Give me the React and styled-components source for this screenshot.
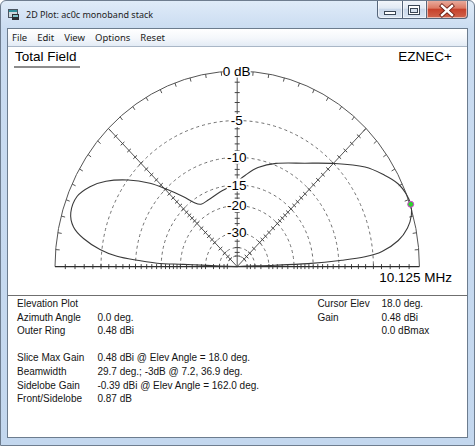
import styled, { createGlobalStyle } from 'styled-components'

const GlobalStyle = createGlobalStyle`
  html, body {
    margin: 0;
    padding: 0;
    background: #ffffff;
  }
  body {
    font-family: "Liberation Sans", Arial, sans-serif;
  }
`

const Window = styled.div`
  width: 475px;
  height: 446px;
  box-sizing: border-box;
  border: 1px solid #6e7d8f;
  border-radius: 6px 6px 0 0;
  background: linear-gradient(to bottom, #dfebf8 0px, #cadcf1 28px, #c3d7ee 100%);
  display: flex;
  flex-direction: column;
  overflow: hidden;
`

const TitleBar = styled.div`
  height: 27px;
  flex: none;
  display: flex;
  align-items: flex-start;
  padding-left: 7px;
`

const AppIcon = styled.svg`
  margin-top: 8px;
  flex: none;
`

const Caption = styled.div`
  margin: 7px 0 0 7px;
  font-family: "Noto Sans", "Open Sans", sans-serif;
  font-size: 9px;
  color: #1c1c1c;
  line-height: 14px;
`

const CaptionButtons = styled.div`
  display: flex;
  margin: -1px 6px 0 auto;
`

const CaptionButton = styled.div`
  width: ${p => p.$w}px;
  height: 19px;
  box-sizing: border-box;
  margin-left: -1px;
  border: 1px solid #56667b;
  border-top: none;
  border-radius: ${p => p.$radius};
  background: ${p => p.$close
    ? 'linear-gradient(#eab0a3, #dc7a64 45%, #c7412b 52%, #d0644c)'
    : 'linear-gradient(#f4f7fb, #e2eaf4 45%, #cad8ea 52%, #d9e5f3)'};
  box-shadow: inset 0 0 0 1px rgba(255, 255, 255, 0.55);
  svg { display: block; }
`

const Client = styled.div`
  flex: 1;
  margin: 0 6px 7px;
  border: 1px solid #6c7c8e;
  background: #ffffff;
  display: flex;
  flex-direction: column;
`

const MenuBar = styled.div`
  height: 17px;
  flex: none;
  display: flex;
  align-items: center;
  border-bottom: 1px solid #a9b6c6;
  background: linear-gradient(#ffffff, #f4f7fb 55%, #e3ebf5);
`

const MenuItem = styled.span`
  padding: 0 5px;
  font-family: "Noto Sans", "Open Sans", sans-serif;
  font-size: 9.5px;
  color: #1a1a1a;
  &:first-child { padding-left: 4px; }
`

const PlotPanel = styled.div`
  height: 248px;
  flex: none;
  display: grid;
  border-bottom: 1px solid #6f6f6f;
  & > * { grid-area: 1 / 1; }
`

const PlotHeader = styled.div`
  display: flex;
  justify-content: space-between;
  align-items: flex-start;
  padding: 2px 15px 0 6px;
  font-size: 13.5px;
  line-height: 15.5px;
  color: #000;
  z-index: 1;
  pointer-events: none;
`

const PlotTitle = styled.span`
  padding: 0 3px 1px 1px;
  border-bottom: 2px solid #8c8c8c;
`

const PlotSvg = styled.svg`
  display: block;
`

const InfoPanel = styled.div`
  flex: 1;
  display: flex;
  padding: 1px 0 0 9px;
  font-size: 10px;
  line-height: 13.6px;
  color: #141414;
`

const InfoGrid = styled.div`
  display: grid;
  grid-template-columns: ${p => p.$label}px auto;
  grid-auto-rows: 13.6px;
  width: ${p => p.$width};
  align-content: start;
`

const InfoWide = styled.div`
  grid-column: 1 / span 2;
`

const CX = 237.2
const CY = 266.6
const RX = 182.2
const RY = 195.5

const rOf = db => Math.pow(0.89, -db / 2)
const pt = (deg, r) => {
  const a = (deg * Math.PI) / 180
  return [CX + RX * r * Math.cos(a), CY - RY * r * Math.sin(a)]
}
const f = n => Math.round(n * 10) / 10

const arc = r => `M${f(CX - RX * r)},${CY} A${f(RX * r)} ${f(RY * r)} 0 0 1 ${f(CX + RX * r)},${CY}`

const rings = [-5, -10, -15, -20, -30, -40, -50]

const tickDbs = []
for (let d = -1; d >= -20; d--) tickDbs.push(d)
tickDbs.push(-22, -24, -26, -28, -30, -35, -40, -45, -50)

const axisAngles = [0, 45, 90, 135, 180]

const labels = [
  [0, '0 dB', 28],
  [-5, '-5', 13],
  [-10, '-10', 20],
  [-15, '-15', 20],
  [-20, '-20', 20],
  [-30, '-30', 20],
]

const pattern = [
  [237.2, 266.6], [246, 266], [275, 265.2], [308, 263.6], [342, 260.2],
  [365, 256.7], [382, 251.5], [398.3, 240.5], [407.5, 228], [411.4, 215],
  [410.7, 204.3], [406.5, 194.5], [398.3, 184], [385, 175.5], [365, 167],
  [335, 163.5], [305, 163.2], [276, 163.4], [258, 167.5], [245, 175.5],
  [232, 185.5], [220, 192], [209, 199.5], [201, 204.2], [194, 202.5],
  [183, 196.5], [168, 189.8], [150, 183.2], [128, 180], [106, 181.2],
  [90, 186.7], [77, 196.5], [70.8, 212.5], [73.5, 227], [83.5, 238.5],
  [100, 249.5], [117, 256.3], [137, 260.2], [157, 263.2], [183, 264.4],
  [207, 265.4], [237.2, 266.6],
]

function smoothPath(pts) {
  let d = `M${pts[0][0]},${pts[0][1]}`
  for (let i = 0; i < pts.length - 1; i++) {
    const p0 = pts[i - 1] || pts[i]
    const p1 = pts[i]
    const p2 = pts[i + 1]
    const p3 = pts[i + 2] || p2
    const c1 = [f(p1[0] + (p2[0] - p0[0]) / 6), f(p1[1] + (p2[1] - p0[1]) / 6)]
    const c2 = [f(p2[0] - (p3[0] - p1[0]) / 6), f(p2[1] - (p3[1] - p1[1]) / 6)]
    d += ` C${c1[0]},${c1[1]} ${c2[0]},${c2[1]} ${p2[0]},${p2[1]}`
  }
  return d
}

function axisTicks() {
  const out = []
  axisAngles.forEach(deg => {
    const a = (deg * Math.PI) / 180
    const dx = RX * Math.cos(a)
    const dy = -RY * Math.sin(a)
    const len = Math.hypot(dx, dy)
    const nx = -dy / len
    const ny = dx / len
    tickDbs.forEach(db => {
      const [x, y] = pt(deg, rOf(db))
      out.push(`M${f(x - nx * 2.5)},${f(y - ny * 2.5)} L${f(x + nx * 2.5)},${f(y + ny * 2.5)}`)
    })
  })
  return out.join(' ')
}

function rimTicks() {
  const out = []
  for (let deg = 5; deg < 180; deg += 5) {
    if (deg === 90) continue
    const [x, y] = pt(deg, 1)
    const dx = CX - x
    const dy = CY - y
    const len = Math.hypot(dx, dy)
    out.push(`M${f(x)},${f(y)} L${f(x + (dx / len) * 4)},${f(y + (dy / len) * 4)}`)
  }
  return out.join(' ')
}

const PolarPlot = () => {
  const [x45, y45] = pt(45, 1)
  const [x135, y135] = pt(135, 1)
  return (
    <PlotSvg width="459" height="248" viewBox="8 47 459 248">
      <g fill="none" stroke="#707070" strokeWidth="1" strokeDasharray="3 3">
        {rings.map(db => <path key={db} d={arc(rOf(db))} />)}
      </g>
      <g fill="none" stroke="#555" strokeWidth="1">
        <path d={arc(1)} />
        <line x1={CX} y1={CY} x2={f(x45)} y2={f(y45)} />
        <line x1={CX} y1={CY} x2={f(x135)} y2={f(y135)} />
        <line x1={CX} y1={CY} x2={CX} y2={CY - RY} />
        <path d={axisTicks()} stroke="#444" />
        <path d={rimTicks()} stroke="#555" />
      </g>
      <line x1={f(CX - RX)} y1={CY} x2={f(CX + RX)} y2={CY} stroke="#2e2e2e" strokeWidth="1.2" />
      <path d={smoothPath(pattern)} fill="none" stroke="#3a3a3a" strokeWidth="1.1" />
      <circle cx="410.7" cy="204.3" r="3" fill="#2fd12f" stroke="#d640d6" strokeWidth="1" />
      <g fontFamily='"Liberation Sans", Arial, sans-serif' fontSize="13.5" fill="#000" textAnchor="middle">
        {labels.map(([db, text, w]) => {
          const y = CY - RY * rOf(db)
          return (
            <g key={db}>
              <rect x={f(CX - w / 2 - 0.5)} y={f(y - 6.5)} width={w} height="13" fill="#fff" />
              <text x={CX - 0.5} y={f(y + 4.8)}>{text}</text>
            </g>
          )
        })}
        <text x="452" y="281.7" textAnchor="end">10.125 MHz</text>
      </g>
    </PlotSvg>
  )
}

const leftRows = [
  ['Azimuth Angle', '0.0 deg.'],
  ['Outer Ring', '0.48 dBi'],
  ['', ''],
  ['Slice Max Gain', '0.48 dBi @ Elev Angle = 18.0 deg.'],
  ['Beamwidth', '29.7 deg.; -3dB @ 7.2, 36.9 deg.'],
  ['Sidelobe Gain', '-0.39 dBi @ Elev Angle = 162.0 deg.'],
  ['Front/Sidelobe', '0.87 dB'],
]

const rightRows = [
  ['Cursor Elev', '18.0 deg.'],
  ['Gain', '0.48 dBi'],
  ['', '0.0 dBmax'],
]

const InfoRows = ({ rows }) =>
  rows.flatMap(([k, v], i) => [
    <span key={`k${i}`}>{k}</span>,
    <span key={`v${i}`}>{v}</span>,
  ])

const App = () => {
  return (
    <>
      <GlobalStyle />
      <Window>
        <TitleBar>
          <AppIcon width="11" height="11" viewBox="0 0 11 11">
            <rect x="0.5" y="0.5" width="9" height="8" fill="#cfd8dc" stroke="#4a5560" />
            <rect x="1" y="1" width="8" height="2" fill="#2f8f9a" />
            <rect x="4" y="5" width="7" height="6" fill="#2b2f33" />
            <rect x="5" y="6" width="5" height="2" fill="#7fc3c9" />
          </AppIcon>
          <Caption>2D Plot: ac0c monoband stack</Caption>
          <CaptionButtons>
            <CaptionButton $w={26} $radius="0 0 0 4px">
              <svg width="24" height="18" viewBox="0 0 24 18">
                <rect x="6.5" y="11.5" width="11" height="3" fill="#fff" stroke="#3b4756" />
              </svg>
            </CaptionButton>
            <CaptionButton $w={25}>
              <svg width="23" height="18" viewBox="0 0 23 18">
                <rect x="5.5" y="5.5" width="11" height="9" fill="#fff" stroke="#3b4756" />
                <rect x="7.5" y="8.5" width="7" height="4" fill="#d6e1ee" stroke="#3b4756" />
              </svg>
            </CaptionButton>
            <CaptionButton $w={42} $radius="0 0 4px 0" $close>
              <svg width="40" height="18" viewBox="0 0 40 18">
                <path d="M15,6 L25,15 M25,6 L15,15" stroke="#6b1f14" strokeWidth="4.2" strokeLinecap="square" />
                <path d="M15,6 L25,15 M25,6 L15,15" stroke="#fff" strokeWidth="2.4" strokeLinecap="square" />
              </svg>
            </CaptionButton>
          </CaptionButtons>
        </TitleBar>
        <Client>
          <MenuBar>
            {['File', 'Edit', 'View', 'Options', 'Reset'].map(m => <MenuItem key={m}>{m}</MenuItem>)}
          </MenuBar>
          <PlotPanel>
            <PlotHeader>
              <PlotTitle>Total Field</PlotTitle>
              <span>EZNEC+</span>
            </PlotHeader>
            <PolarPlot />
          </PlotPanel>
          <InfoPanel>
            <InfoGrid $label={80.4} $width="300.4px">
              <InfoWide>Elevation Plot</InfoWide>
              <InfoRows rows={leftRows} />
            </InfoGrid>
            <InfoGrid $label={64} $width="auto">
              <InfoRows rows={rightRows} />
            </InfoGrid>
          </InfoPanel>
        </Client>
      </Window>
    </>
  )
}

export default App
